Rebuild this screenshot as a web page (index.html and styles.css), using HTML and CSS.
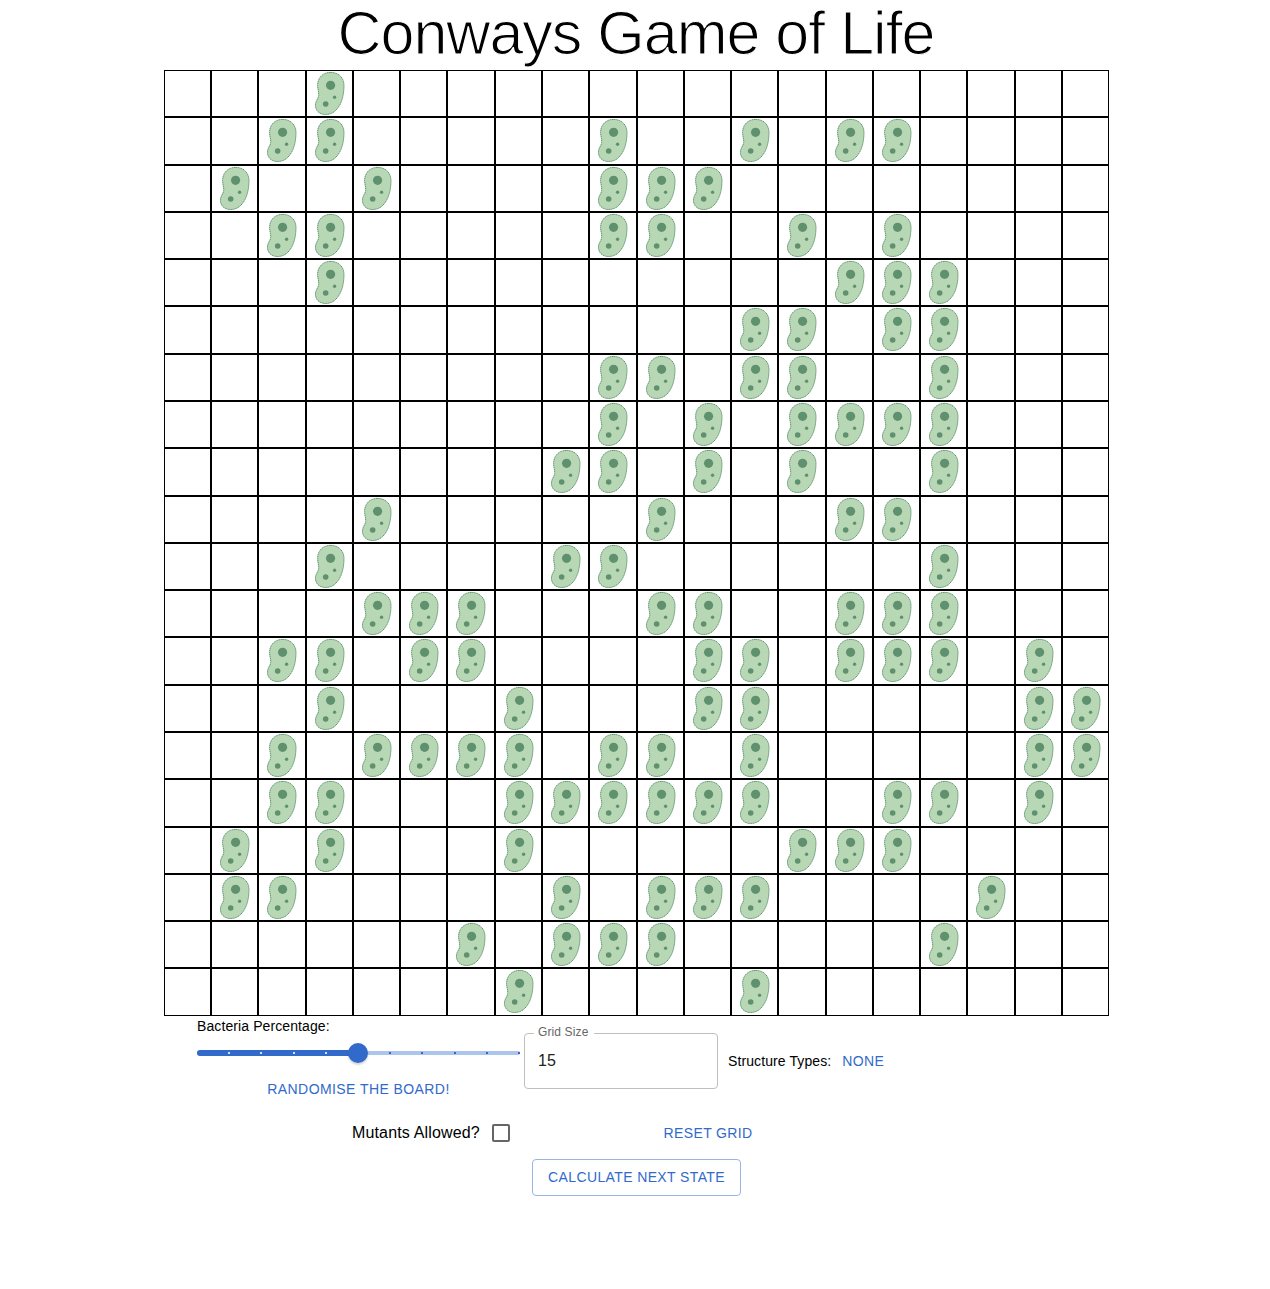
FILE: index.html
```html
<!DOCTYPE html>
<html lang="en">
<head>
<meta charset="utf-8">
<title>Conways Game of Life</title>
<link rel="stylesheet" href="styles.css">
</head>
<body>
<svg class="defs" aria-hidden="true">
  <symbol id="bacteria" viewBox="0 0 45.3 45.3">
    <path class="membrane" d="M23.6 1.400C15.800 1.400 10.600 7 10.600 14.500C10.600 18 12 21 11.700 24.500C11.400 28 8.500 29.500 8.500 34.300C8.500 39.700 12.500 43.500 18.500 43.500C25.500 43.500 29.800 39.500 32.900 33.700C35.700 28.500 37 21.500 37 14.500C37 6.800 31.500 1.400 23.600 1.400Z"/>
    <circle class="organelle" cx="23.6" cy="14.3" r="4.6"/>
    <circle class="organelle" cx="27.6" cy="26.3" r="1.7"/>
    <circle class="organelle" cx="18.7" cy="33" r="2.8"/>
  </symbol>
</svg>
<h1 class="title">Conways Game of Life</h1>
<main class="board" id="board"></main>
<section class="controls">
  <div class="settings">
    <div class="percentage">
      <span class="body2">Bacteria Percentage:</span>
      <div class="slider">
        <div class="rail"></div>
        <div class="track"></div>
        <div class="marks"><i></i><i></i><i></i><i></i><i></i><i></i><i></i><i></i><i></i><i></i></div>
        <div class="thumb"></div>
      </div>
      <button class="button">Randomise the board!</button>
    </div>
    <fieldset class="field"><legend>Grid Size</legend><span>15</span></fieldset>
    <div class="structures"><span class="body2">Structure Types:</span><button class="button">None</button></div>
  </div>
  <div class="options">
    <label class="mutants">Mutants Allowed?<span class="checkbox"></span></label>
    <button class="button">Reset grid</button>
  </div>
  <button class="button outlined">Calculate next state</button>
</section>
<script src="board.js"></script>
</body>
</html>
```
FILE: styles.css
```css
* { box-sizing: border-box; }
body { margin: 0; background: #fff; color: #000; font-family: "Liberation Sans", Arial, sans-serif; }
.defs { display: block; width: 0; height: 0; }
.title {
  margin: 0; height: 70px; padding-left: 2px; text-align: center; white-space: nowrap;
  font-size: 61px; line-height: 67px; font-weight: 400; letter-spacing: -1px;
  -webkit-text-stroke: 1.2px #fff;
}
.board {
  display: grid; grid-template: repeat(20, 47.285px) / repeat(20, 47.27px);
  width: 945px; height: 946px; margin-left: 163.9px;
}
.cell { border: 1px solid #000; }
.cell svg { display: block; width: 100%; height: 100%; }
.membrane { fill: #b8d8b5; stroke: #5f956f; stroke-width: 1; stroke-dasharray: 1.5 .5; }
.organelle { fill: #5f916f; }
.controls { width: 945px; margin-left: 164px; }
.settings { display: flex; height: 95px; }
.body2 { font-size: 14px; line-height: 20px; letter-spacing: .1px; white-space: nowrap; }
.percentage { width: 323px; margin-left: 33px; display: flex; flex-direction: column; }
.percentage .button { margin-top: 7px; align-self: center; }
.slider { position: relative; height: 34px; }
.rail { position: absolute; left: 0; right: 0; top: 15px; height: 4px; border-radius: 2px; background: #adc5eb; }
.track { position: absolute; left: 0; top: 14px; width: 161px; height: 6px; border-radius: 3px; background: #316acb; }
.marks { position: absolute; left: 1px; right: 0; top: 16px; display: flex; }
.marks i { width: 2px; height: 2px; background: #316acb; margin-left: 30.25px; }
.marks i:nth-child(-n+4) { background: #d6e1f4; }
.thumb {
  position: absolute; left: 151px; top: 7px; width: 20px; height: 20px; border-radius: 50%;
  background: #316acb; box-shadow: 0 2px 2px rgba(0,0,0,.16);
}
.button {
  border: 0; padding: 0; background: none; color: #316acb; font: 14px/24px "Liberation Sans", Arial, sans-serif;
  letter-spacing: .38px; text-transform: uppercase; white-space: nowrap;
}
.percentage .button { letter-spacing: .42px; }
.field {
  width: 194px; height: 63px; margin: 10px 0 0 4px; padding: 0 0 0 13px;
  border: 1px solid #bfbfbf; border-radius: 4px;
}
.field legend { margin-left: -4px; padding: 0 6px 0 4px; color: #666; font-size: 12px; line-height: 13px; height: 14px; letter-spacing: .12px; }
.field span { display: block; margin-top: 9px; font-size: 16px; line-height: 24px; color: #222; }
.structures { display: flex; gap: 11px; height: 24px; align-items: center; margin: 33px 0 0 10px; }
.options { height: 44px; display: flex; align-items: center; padding-left: 188px; }
.mutants { width: 311.5px; display: flex; align-items: center; font-size: 16px; letter-spacing: .15px; }
.checkbox { width: 18px; height: 18px; margin-left: 12px; border: 2px solid #666; border-radius: 2px; }
.outlined { display: block; width: 209px; height: 37px; margin: 4px auto 0 368px; padding-bottom: 2px; border: 1px solid #98b5e5; border-radius: 4px; }
```
FILE: board.js
```js
const SIZE = 20;
const alive = [
  [3], [2,3,9,12,14,15], [1,4,9,10,11], [2,3,9,10,13,15], [3,14,15,16],
  [12,13,15,16], [9,10,12,13,16], [9,11,13,14,15,16], [8,9,11,13,16], [4,10,14,15],
  [3,8,9,16], [4,5,6,10,11,14,15,16], [2,3,5,6,11,12,14,15,16,18], [3,7,11,12,18,19],
  [2,4,5,6,7,9,10,12,18,19], [2,3,7,8,9,10,11,12,15,16,18], [1,3,7,13,14,15],
  [1,2,8,10,11,12,17], [6,8,9,10,16], [7,12]
];
const board = document.getElementById("board");
for (let row = 0; row < SIZE; row++) {
  for (let col = 0; col < SIZE; col++) {
    const cell = document.createElement("div");
    cell.className = "cell";
    if (alive[row].includes(col)) cell.innerHTML = '<svg><use href="#bacteria"/></svg>';
    board.appendChild(cell);
  }
}
```
